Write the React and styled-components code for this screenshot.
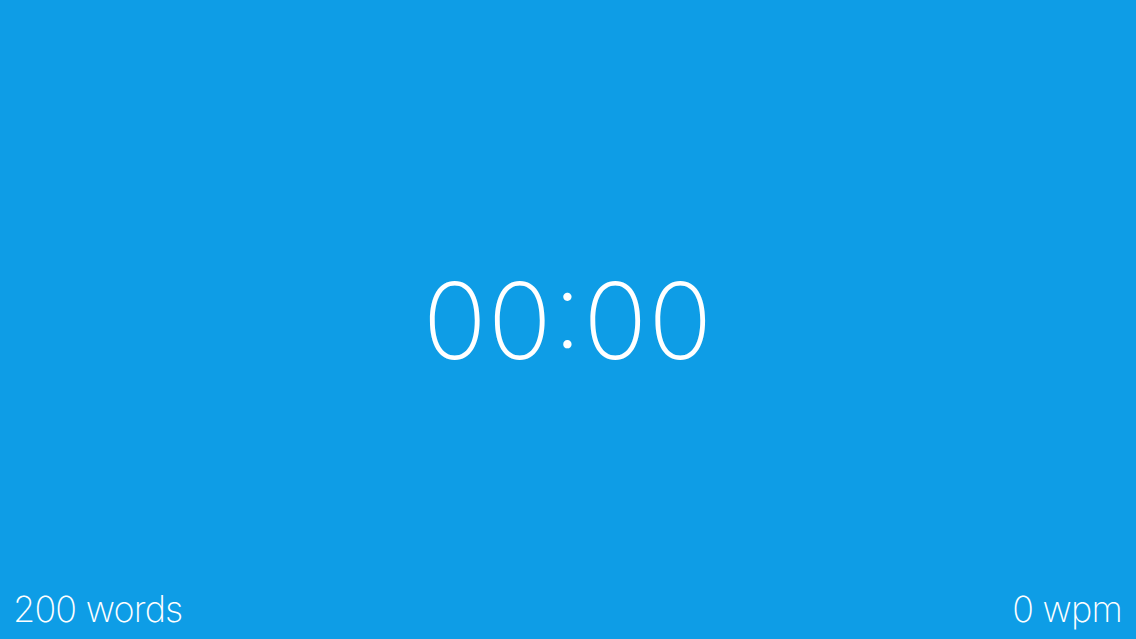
import React from "react";
import styled, { createGlobalStyle } from "styled-components";

const GlobalStyle = createGlobalStyle`
  html, body, #root {
    margin: 0;
    height: 100%;
  }
  body {
    background: #0e9de6;
    font-family: Inter, Roboto, "Liberation Sans", sans-serif;
    overflow: hidden;
  }
`;

const Screen = styled.div`
  height: 100vh;
  display: flex;
  flex-direction: column;
  color: #ffffff;
`;

const ClockArea = styled.main`
  flex: 1;
  display: flex;
  align-items: center;
  justify-content: center;
`;

const Clock = styled.div`
  font-size: 106px;
  font-weight: 200;
  line-height: 1;
  letter-spacing: 1px;
  font-feature-settings: "case" 1;
  margin-top: 50px;
`;

const Footer = styled.footer`
  display: flex;
  justify-content: space-between;
  align-items: flex-end;
  padding: 0 14px 12px 13px;
`;

const Stat = styled.span`
  font-size: 36px;
  font-weight: 200;
  line-height: 1;
  letter-spacing: -0.8px;
`;

const App = () => (
  <>
    <GlobalStyle />
    <Screen>
      <ClockArea>
        <Clock>00:00</Clock>
      </ClockArea>
      <Footer>
        <Stat>200 words</Stat>
        <Stat>0 wpm</Stat>
      </Footer>
    </Screen>
  </>
);

export default App;
